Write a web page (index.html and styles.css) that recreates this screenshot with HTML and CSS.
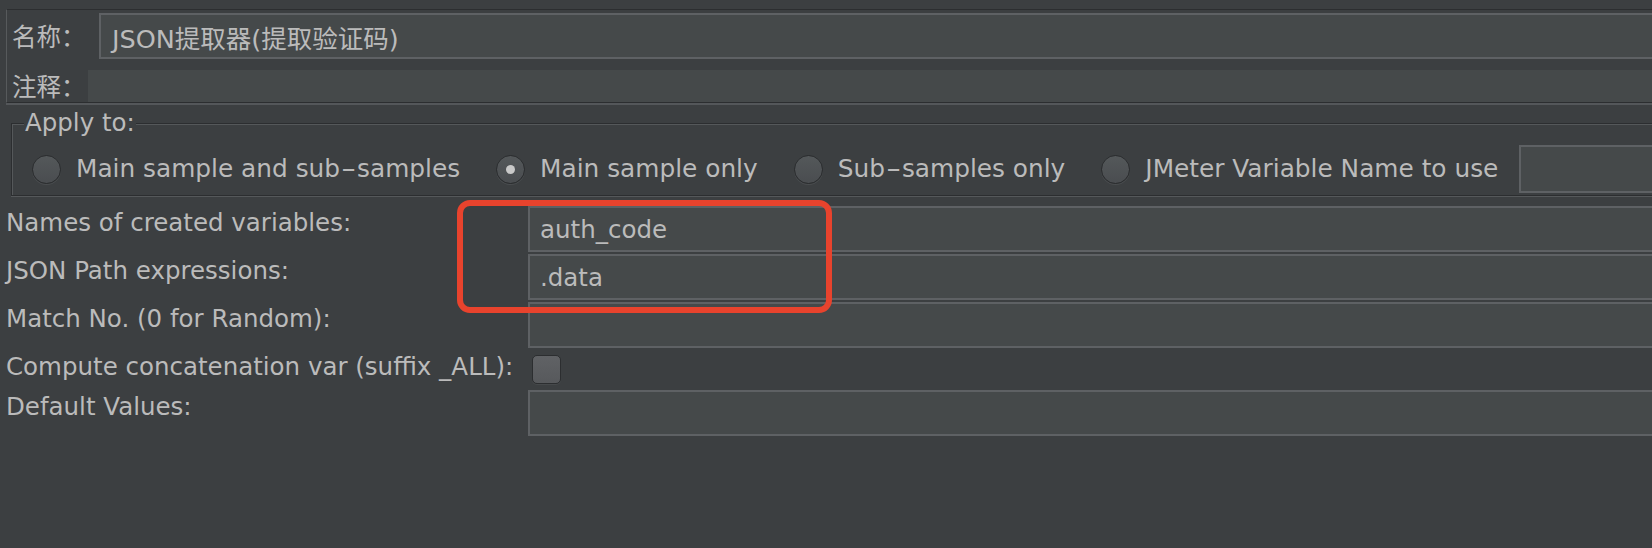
FILE: index.html
```html
<!DOCTYPE html>
<html lang="zh-CN">
<head>
<meta charset="utf-8">
<title>JSON提取器</title>
<link rel="stylesheet" href="styles.css">
</head>
<body>
<div class="page">
  <div class="info-panel">
    <div class="info-row">
      <span class="info-label">名称：</span>
      <div class="text-field name-field">JSON提取器(提取验证码)</div>
    </div>
    <div class="info-row">
      <span class="info-label">注释：</span>
      <div class="comment-field"></div>
    </div>
  </div>

  <fieldset class="apply-to">
    <legend>Apply to:</legend>
    <div class="radio-row">
      <label class="radio-option"><span class="radio"></span>Main sample and sub<span class="dash">-</span>samples</label>
      <label class="radio-option"><span class="radio checked"></span>Main sample only</label>
      <label class="radio-option"><span class="radio"></span>Sub<span class="dash">-</span>samples only</label>
      <label class="radio-option"><span class="radio"></span>JMeter Variable Name to use</label>
      <div class="text-field var-field"></div>
    </div>
  </fieldset>

  <div class="form-grid">
    <span class="form-label">Names of created variables:</span>
    <div class="text-field value-field">auth_code</div>

    <span class="form-label">JSON Path expressions:</span>
    <div class="text-field value-field">.data</div>

    <span class="form-label">Match No. (0 for Random):</span>
    <div class="text-field value-field"></div>

    <span class="form-label">Compute concatenation var (suffix _ALL):</span>
    <div class="check-cell"><span class="checkbox"></span></div>

    <span class="form-label">Default Values:</span>
    <div class="text-field value-field"></div>
  </div>

  <div class="highlight"></div>
</div>
</body>
</html>
```

FILE: styles.css
```css
html, body {
  margin: 0;
  padding: 0;
}

body {
  width: 1652px;
  height: 548px;
  overflow: hidden;
  background: #3c3f41;
  color: #bbbbbb;
  font-family: "DejaVu Sans", "Noto Sans CJK SC", sans-serif;
  font-size: 24.5px;
}

.page {
  position: relative;
  width: 1690px;
  padding-top: 9px;
}

/* ---------- name / comment panel ---------- */
.info-panel {
  margin-left: 6px;
  border-top: 1px solid #2c2e30;
  border-left: 1px solid #575a5c;
  border-bottom: 1px solid #2c2e30;
  box-shadow: 0 2px 0 #54575a;
  padding: 3px 0 0 5px;
  display: flex;
  flex-direction: column;
  gap: 11px;
}

.info-row {
  display: flex;
  align-items: center;
}

.info-label {
  width: 76px;
  flex: none;
  font-family: "Noto Sans CJK SC", sans-serif;
  line-height: 30px;
}

.text-field {
  box-sizing: border-box;
  background: #45494a;
  border: 2px solid #5e6164;
  color: #bbbbbb;
  display: flex;
  align-items: center;
}

.name-field {
  flex: 1;
  margin-left: 11px;
  height: 46px;
  padding-left: 11px;
  font-size: 25.5px;
  font-family: "DejaVu Sans", "Noto Sans CJK SC", sans-serif;
}

.comment-field {
  flex: 1;
  height: 32px;
  background: #45494a;
}

/* ---------- apply to ---------- */
.apply-to {
  margin: 6px 0 0 11px;
  padding: 8px 0 2px 20px;
  border: 1px solid #2c2e30;
  box-shadow: inset 1px 1px 0 #55585a, 0 1px 0 #55585a;
  min-width: 0;
}

.apply-to legend {
  margin-left: -8px;
  padding: 0 1px;
  line-height: 28px;
  background: #3c3f41;
}

.radio-row {
  display: flex;
  align-items: center;
  gap: 36px;
  font-size: 24.8px;
}

.radio-option {
  display: flex;
  align-items: center;
  white-space: nowrap;
  line-height: 30px;
}

.dash {
  display: inline-block;
  width: 17px;
  text-align: center;
  transform: scaleX(1.7);
}

.radio {
  position: relative;
  box-sizing: border-box;
  width: 29px;
  height: 29px;
  margin-right: 15px;
  border-radius: 50%;
  border: 1px solid #2a2c2e;
  background: linear-gradient(#54585a, #4a4d50);
  box-shadow: 0 1px 0 #4a4d4f;
  flex: none;
}

.radio.checked::after {
  content: "";
  position: absolute;
  left: 9px;
  top: 9px;
  width: 9px;
  height: 9px;
  border-radius: 50%;
  background: #c9c9c9;
}

.var-field {
  flex: 1;
  height: 48px;
  margin-left: -15px;
}

/* ---------- form grid ---------- */
.form-grid {
  display: grid;
  grid-template-columns: 522px 1fr;
  row-gap: 2px;
  padding: 10px 0 0 6px;
}

.form-label {
  line-height: 30px;
  padding-top: 2px;
  white-space: nowrap;
  align-self: start;
}

.value-field {
  height: 46px;
  padding-left: 10px;
}

.check-cell {
  height: 38px;
  display: flex;
  align-items: center;
  padding-left: 4px;
}

.checkbox {
  box-sizing: border-box;
  width: 29px;
  height: 29px;
  border-radius: 5px;
  border: 1px solid #2c2e30;
  background: linear-gradient(#606265, #57595c);
  box-shadow: 0 1px 0 #46494b;
}

/* ---------- red annotation ---------- */
.highlight {
  position: absolute;
  left: 457px;
  top: 200px;
  width: 375px;
  height: 113px;
  box-sizing: border-box;
  border: 6px solid #e8432d;
  border-radius: 13px;
}
```
